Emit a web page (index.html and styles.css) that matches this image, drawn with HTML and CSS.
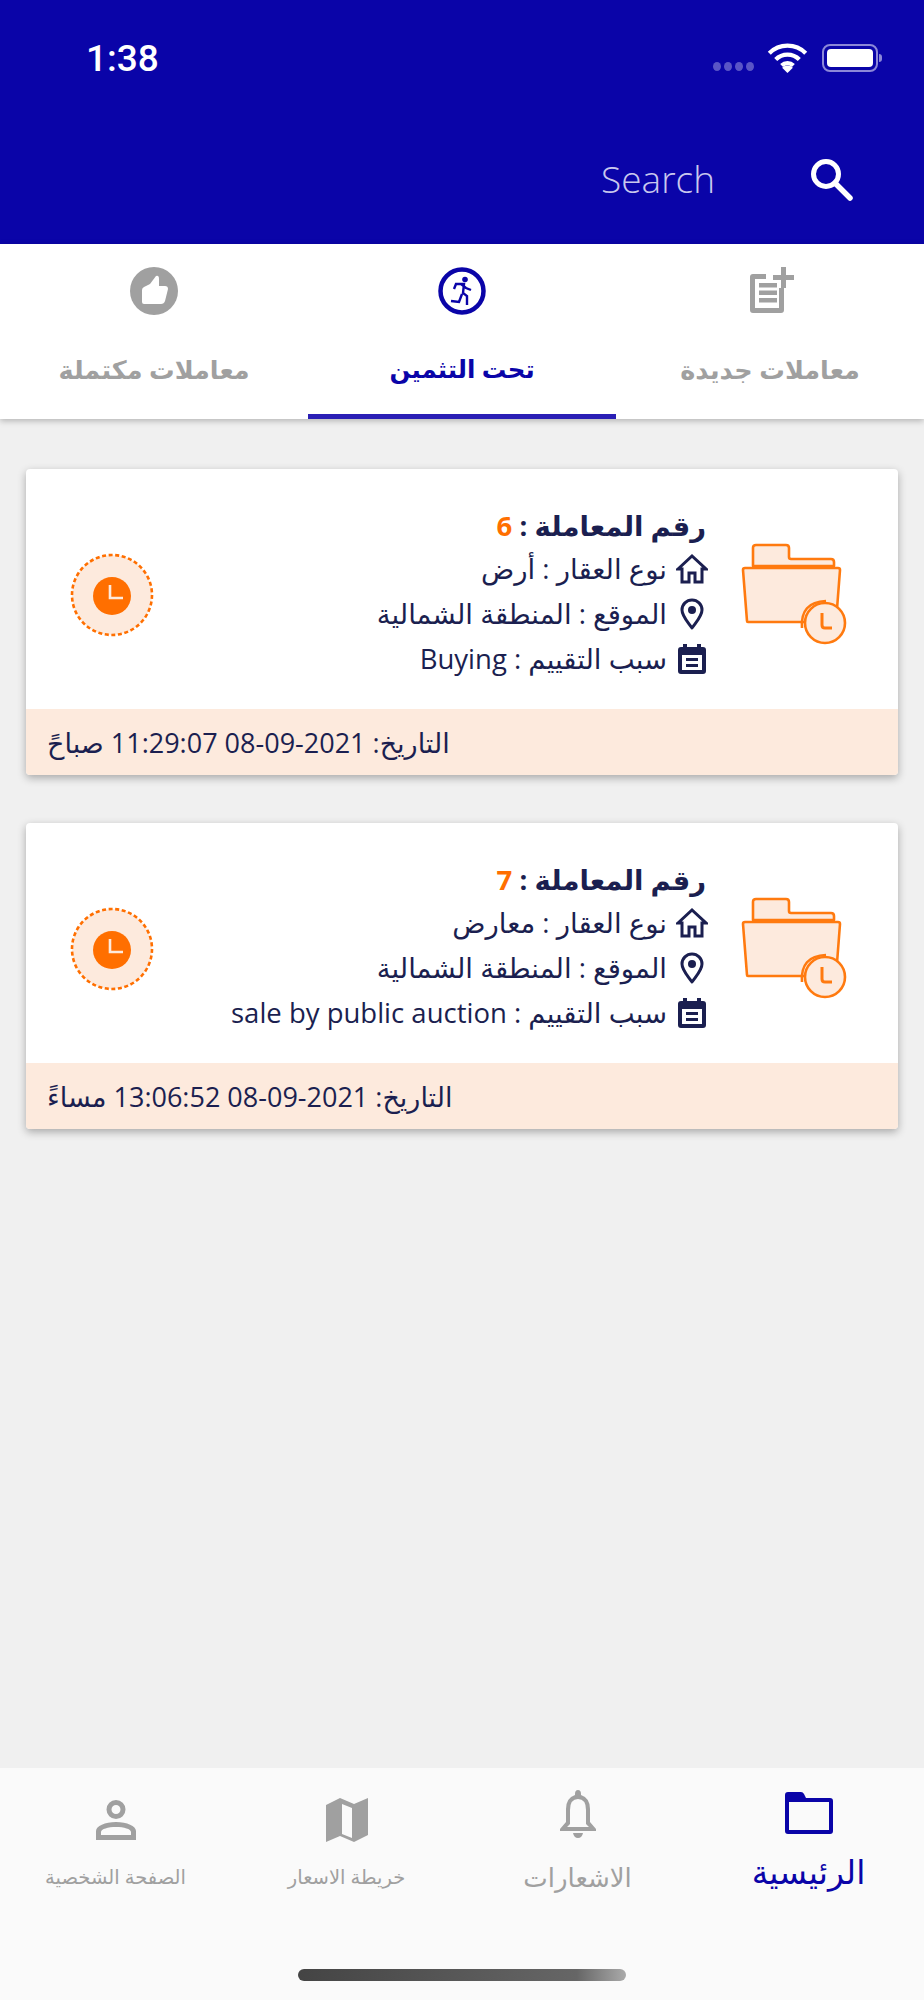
FILE: index.html
```html
<!DOCTYPE html>
<html lang="ar" dir="rtl">
<head>
  <meta charset="UTF-8">
  <meta name="viewport" content="width=device-width, initial-scale=1.0">
  <title>المعاملات</title>
  <link rel="stylesheet" href="styles.css">
</head>
<body>
  <svg class="sprite" width="0" height="0">
    <symbol id="folder" viewBox="0 0 110 104">
      <path d="M13 23V5q0-3 3-3h30q3 0 3 3v9q0 2 2 2h40q3 0 3 3v4z" fill="#fdeadd" stroke="#ff7a0f" stroke-width="2.6" stroke-linejoin="round"/>
      <path d="M5 25h93q2 0 2 2l-4 52H8q-1 0-1-1L3 27q0-2 2-2z" fill="#fdeadd" stroke="#ff7a0f" stroke-width="2.6" stroke-linejoin="round"/>
      <path d="M62 85q-2-26 24-27" fill="none" stroke="#ff7a0f" stroke-width="2.6"/>
      <circle cx="85" cy="80" r="20" fill="#fdeadd" stroke="#ff7a0f" stroke-width="2.6"/>
      <path d="M82 70v12q0 3 3 3h7" fill="none" stroke="#ff7a0f" stroke-width="3" stroke-linejoin="round"/>
    </symbol>
    <symbol id="pending" viewBox="0 0 84 84">
      <circle cx="42" cy="42" r="40" fill="#fdeadd" stroke="#ff6f00" stroke-width="2.6" stroke-dasharray="4 2.6"/>
      <circle cx="42" cy="43" r="19" fill="#ff6f00"/>
      <path d="M40 32v13h13" fill="none" stroke="#fdeadd" stroke-width="2.6"/>
    </symbol>
    <symbol id="home" viewBox="0 0 32 32">
      <path d="M2 16 16 3l14 13h-4v13h-7v-9h-6v9H6V16z" fill="none" stroke="#1b1f50" stroke-width="3" stroke-linejoin="miter"/>
    </symbol>
    <symbol id="pin" viewBox="0 0 32 32">
      <path d="M16 30C11 23 6 18 6 12a10 10 0 0 1 20 0c0 6-5 11-10 18z" fill="none" stroke="#1b1f50" stroke-width="3" stroke-linejoin="round"/>
      <circle cx="16" cy="12" r="4" fill="#1b1f50"/>
    </symbol>
    <symbol id="reason" viewBox="0 0 32 32">
      <path d="M7 1h4v3h10V1h4v3h2q3 0 3 3v21q0 3-3 3H5q-3 0-3-3V7q0-3 3-3h2zM6 12v15h20V12z" fill="#1b1f50"/>
      <rect x="10" y="15" width="12" height="3" fill="#1b1f50"/>
      <rect x="10" y="21" width="12" height="3" fill="#1b1f50"/>
    </symbol>
  </svg>

  <header class="appbar">
    <div class="status" dir="ltr">
      <span class="time">1:38</span>
      <div class="status-icons">
        <span class="signal"><i></i><i></i><i></i><i></i></span>
        <svg width="41" height="30" viewBox="0 0 38 28"><path d="M2 9.500a24 24 0 0 1 34 0M8 15.500a15.500 15.500 0 0 1 22 0M13.500 21a8 8 0 0 1 11 0" fill="none" stroke="#fff" stroke-width="4"/><path d="M19 28l-5-5a7 7 0 0 1 10 0z" fill="#fff"/></svg>
        <span class="battery"><b></b></span>
      </div>
    </div>
    <div class="search" dir="ltr">
      <span class="search-label">Search</span>
      <svg width="44" height="44" viewBox="0 0 44 44"><circle cx="17" cy="17" r="12.500" fill="none" stroke="#fff" stroke-width="5"/><path d="M26 26l15 15" stroke="#fff" stroke-width="5.500" stroke-linecap="round"/></svg>
    </div>
  </header>

  <nav class="tabs">
    <a class="tab">
      <svg width="48" height="48" viewBox="0 0 48 48"><path d="M20 7H7q-3 0-3 3v33q0 3 3 3h28q3 0 3-3V21h-5v20H9V12h11z" fill="#a0a0a0"/><path d="M13 16h18v4.500H13zM13 23.500h18V28H13zM13 31h18v4.500H13z" fill="#a0a0a0"/><path d="M35 0h5v8h8v5h-8v8h-5v-8h-8V8h8z" fill="#a0a0a0"/></svg>
      <span>معاملات جديدة</span>
    </a>
    <a class="tab active">
      <svg width="48" height="48" viewBox="0 0 48 48"><circle cx="24" cy="24" r="21.500" fill="none" stroke="#0a04a8" stroke-width="4.500"/><circle cx="27" cy="12.500" r="2.800" fill="#0a04a8"/><path d="M16 22l2-5h8l-1 9 4 3v9M23 17l5 4 5 2M24 27l-3 8-8-1" fill="none" stroke="#0a04a8" stroke-width="2.400"/></svg>
      <span>تحت التثمين</span>
    </a>
    <a class="tab">
      <svg width="48" height="48" viewBox="0 0 48 48"><circle cx="24" cy="24" r="24" fill="#a0a0a0"/><path d="M26 9q3-1 3 3v7h6q3 0 3 3l-3 12q-1 3-4 3H14q-2 0-2-2V23q0-2 2-3l6-3z" fill="#fff"/></svg>
      <span>معاملات مكتملة</span>
    </a>
  </nav>

  <main class="list">
    <article class="card">
      <div class="card-body">
        <svg class="folder"><use href="#folder"/></svg>
        <div class="info">
          <h2 class="info-title">رقم المعاملة : <em>6</em></h2>
          <p class="info-row"><svg><use href="#home"/></svg>نوع العقار : أرض</p>
          <p class="info-row"><svg><use href="#pin"/></svg>الموقع : المنطقة الشمالية</p>
          <p class="info-row"><svg><use href="#reason"/></svg>سبب التقييم : Buying</p>
        </div>
        <svg class="pending"><use href="#pending"/></svg>
      </div>
      <div class="card-date">التاريخ: 2021-09-08 11:29:07 صباحً</div>
    </article>
    <article class="card">
      <div class="card-body">
        <svg class="folder"><use href="#folder"/></svg>
        <div class="info">
          <h2 class="info-title">رقم المعاملة : <em>7</em></h2>
          <p class="info-row"><svg><use href="#home"/></svg>نوع العقار : معارض</p>
          <p class="info-row"><svg><use href="#pin"/></svg>الموقع : المنطقة الشمالية</p>
          <p class="info-row"><svg><use href="#reason"/></svg>سبب التقييم : sale by public auction</p>
        </div>
        <svg class="pending"><use href="#pending"/></svg>
      </div>
      <div class="card-date">التاريخ: 2021-09-08 13:06:52 مساءً</div>
    </article>
  </main>

  <footer class="bottom">
    <div class="bottom-items">
      <a class="item active">
        <svg width="48" height="42" viewBox="0 0 48 42"><path d="M3 0h13q2 0 3 2l2 4h24q3 0 3 3v30q0 3-3 3H3q-3 0-3-3V3q0-3 3-3zM4 10v28h40V10z" fill="#0a04a8"/></svg>
        <span>الرئيسية</span>
      </a>
      <a class="item mid">
        <svg width="40" height="48" viewBox="0 0 40 48"><path d="M20 0q3 0 3 4v1q9 3 9 14v13l6 7v2H2v-2l6-7V19q0-11 9-14V4q0-4 3-4zM12 20v14l-3 3h22l-3-3V20q0-11-8-11t-8 11zM15 43h10q-1 5-5 5t-5-5z" fill="#a0a0a0"/></svg>
        <span>الاشعارات</span>
      </a>
      <a class="item small">
        <svg width="44" height="44" viewBox="0 0 44 44"><path d="M1 7l14-7 14 6 14-6v37l-14 7-14-6-14 6zM17 6v30l10 4V10z" fill="#a0a0a0" fill-rule="evenodd"/></svg>
        <span>خريطة الاسعار</span>
      </a>
      <a class="item small">
        <svg class="person" width="40" height="40" viewBox="0 0 40 40"><path d="M20 0a9.500 9.500 0 1 1 0 19 9.500 9.500 0 0 1 0-19zm0 5a4.500 4.500 0 1 0 0 9 4.500 4.500 0 0 0 0-9zM20 22c11 0 20 4 20 9v9H0v-9c0-5 9-9 20-9zm0 5c-8 0-15 2-15 5v3h30v-3c0-3-7-5-15-5z" fill="#a0a0a0"/></svg>
        <span>الصفحة الشخصية</span>
      </a>
    </div>
    <div class="home-bar"></div>
  </footer>
</body>
</html>
```

FILE: styles.css
```css
* { box-sizing: border-box; margin: 0; padding: 0; }
body { width: 924px; height: 2000px; background: #f0f0f0; color: #1b1f50;
  font-family: 'Open Sans', 'DejaVu Sans', sans-serif;
  display: flex; flex-direction: column; overflow: hidden;
}
.sprite { display: block; }

.appbar { height: 244px; background: #0a04a8; color: #fff; display: flex; flex-direction: column; }
.status { display: flex; justify-content: space-between; align-items: center; padding: 40px 46px 0 86px; height: 76px; }
.time { font-family: Roboto, sans-serif; font-weight: 500; font-size: 37px; line-height: 42px; margin-top: 1px; }
.status-icons { display: flex; align-items: center; gap: 10px; }
.signal { display: flex; gap: 3px; align-self: flex-end; margin-bottom: 2px; margin-right: 3px; }
.signal i { width: 8px; height: 9px; border-radius: 50%; background: #5a55c6; }
.battery { width: 56px; height: 28px; border: 2px solid #8c88d8; border-radius: 8px; padding: 3px; margin-left: 4px; position: relative; }
.battery b { display: block; height: 100%; background: #fff; border-radius: 4px; }
.battery::after { content: ''; position: absolute; right: -6px; top: 8px; width: 3px; height: 8px; background: #8c88d8; border-radius: 0 3px 3px 0; }
.search { display: flex; justify-content: flex-end; align-items: center; gap: 96px; padding: 0 71px 0 0; margin-top: 77px; }
.search-label { font-size: 37px; font-weight: 300; color: #c9c8ee; margin-right: -2px; }

.tabs { height: 175px; background: #fff; display: flex; box-shadow: 0 2px 6px rgba(0,0,0,0.25); position: relative; }
.tab { flex: 1; display: flex; flex-direction: column; align-items: center; padding-top: 23px; gap: 37px; color: #a0a0a0; font-size: 25.5px; font-weight: 700; border-bottom: 5px solid transparent; }
.tab.active { color: #0a04a8; border-bottom-color: #2a1fb5; font-size: 24.5px; }

.list { flex: 1; display: flex; flex-direction: column; gap: 48px; padding: 50px 26px 0; }
.card { height: 306px; background: #fff; border-radius: 4px; overflow: hidden; box-shadow: 0 3px 8px rgba(0,0,0,0.3); display: flex; flex-direction: column; }
.card-body { flex: 1; display: flex; align-items: center; padding: 0 48px 0 44px; }
.folder { width: 110px; height: 104px; margin-top: 12px; flex: none; }
.info { margin-right: 32px; margin-top: 5px; display: flex; flex-direction: column; gap: 7px; }
.info-title { font-size: 27.5px; font-weight: 700; line-height: 40px; margin-right: 2px; margin-bottom: -3px; }
.info-title em { font-style: normal; color: #ff6f00; }
.info-row { display: flex; align-items: center; gap: 9px; font-size: 27.5px; line-height: 38px; }
.info-row svg { width: 32px; height: 32px; flex: none; }
.pending { width: 84px; height: 84px; margin-right: auto; margin-top: 12px; flex: none; }
.card-date { height: 66px; background: #fdeadd; padding: 0 21px; display: flex; align-items: center; justify-content: flex-end; font-size: 27px; }

.bottom { height: 232px; background: #fafafa; display: flex; flex-direction: column; }
.bottom-items { display: flex; height: 201px; }
.item { flex: 1; display: flex; flex-direction: column; align-items: center; padding-top: 24px; gap: 15px; color: #a0a0a0; font-size: 26px; }
.item.active { color: #0a04a8; font-size: 33px; }
.item.mid { padding-top: 22px; gap: 21px; }
.item.small { font-size: 19.5px; padding-top: 30px; gap: 21px; }
.person { margin: 2px 0; }
.home-bar { width: 328px; height: 12px; margin: 0 auto; border-radius: 6px; background: linear-gradient(90deg, #444 0%, #666 85%, #aaa 100%); }
```
